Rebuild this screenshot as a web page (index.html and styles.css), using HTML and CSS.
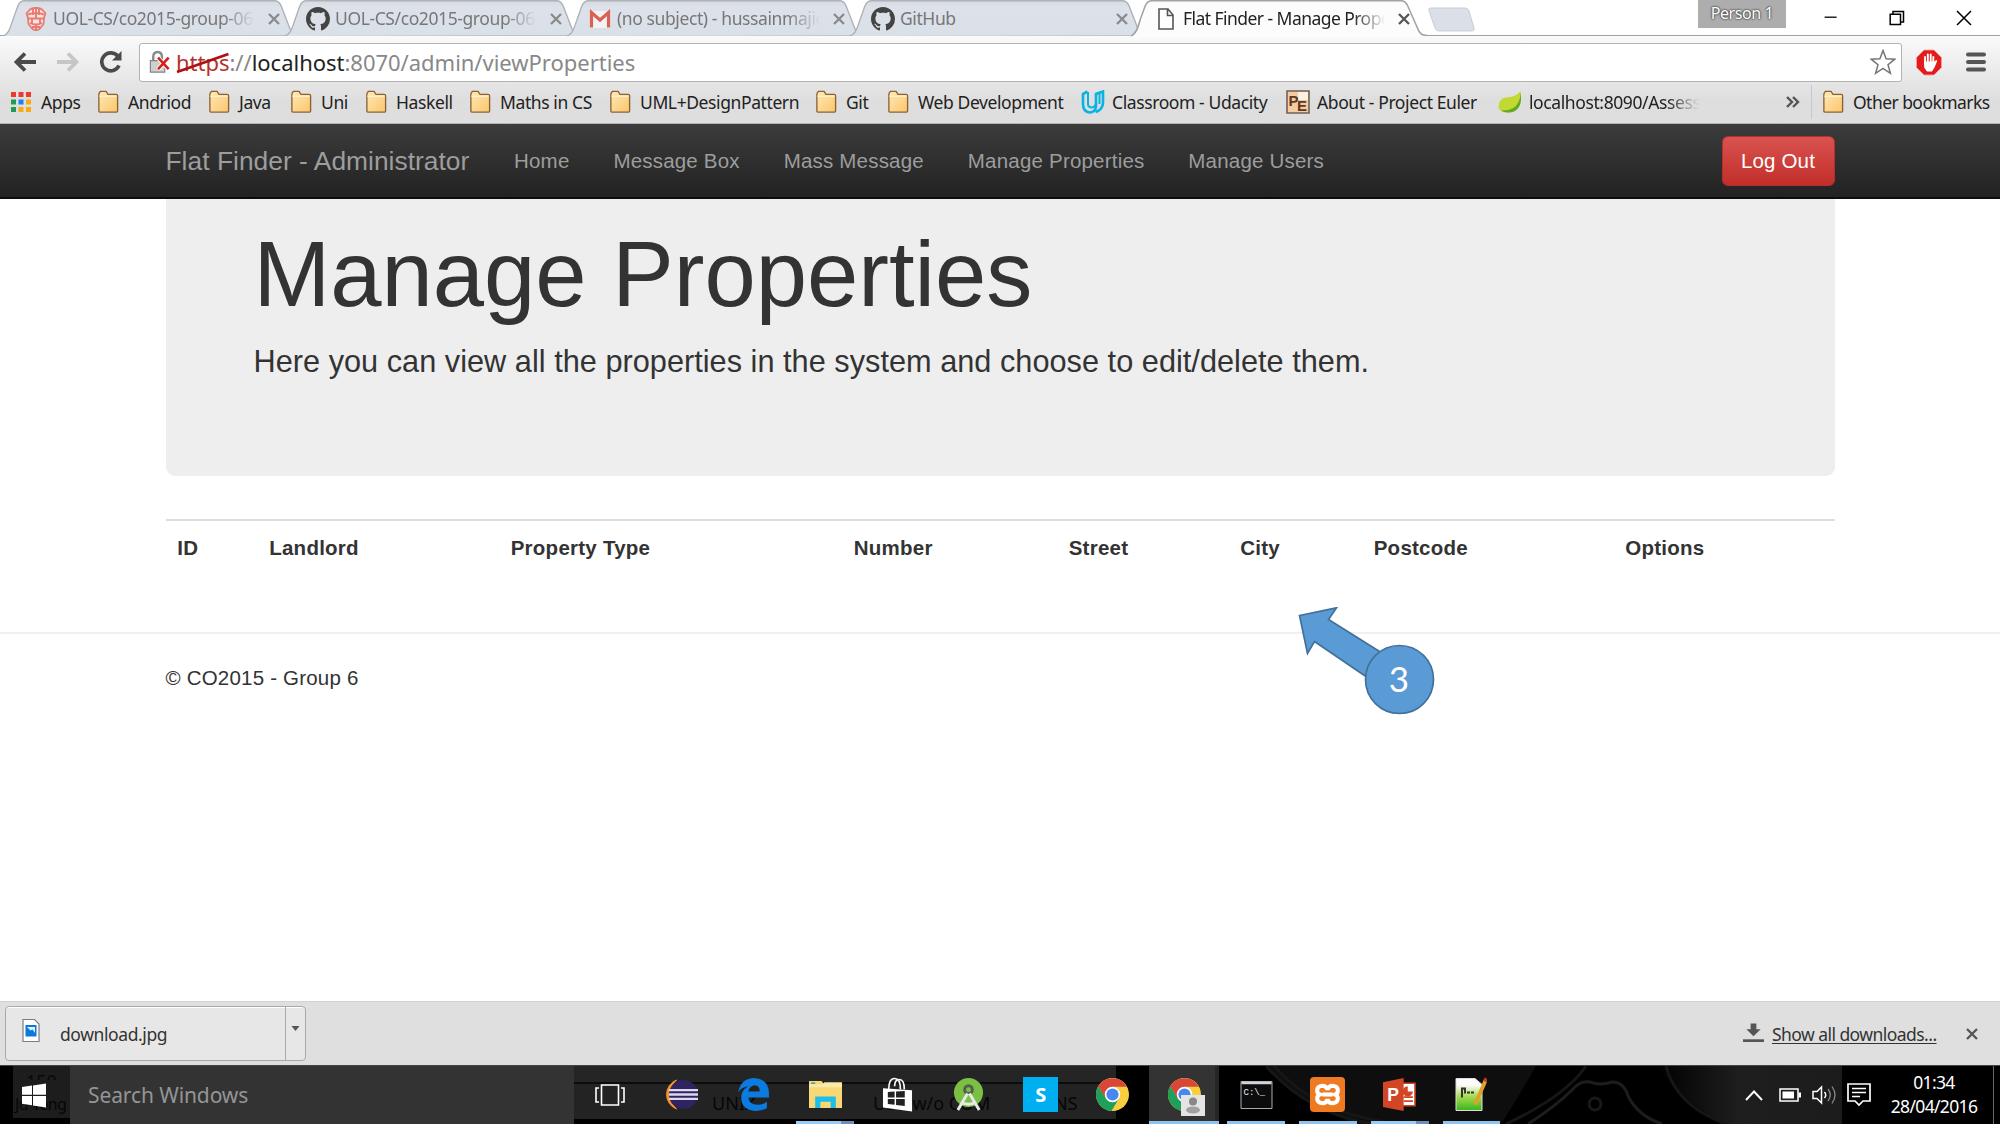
FILE: index.html
```html
<!DOCTYPE html>
<html lang="en">
<head>
<meta charset="utf-8">
<title>Flat Finder - Manage Properties</title>
<link rel="stylesheet" href="styles.css">
</head>
<body>
<svg width="0" height="0" class="defs" aria-hidden="true">
  <defs>
    <linearGradient id="fold" x1="0" y1="0" x2="1" y2="1"><stop offset="0" stop-color="#ffeab4"/><stop offset="1" stop-color="#fbc56c"/></linearGradient>
    <linearGradient id="npp" x1="0" y1="0" x2="0" y2="1"><stop offset="0.2" stop-color="#fdfdfd"/><stop offset="0.55" stop-color="#a9dc52"/><stop offset="1" stop-color="#38b41c"/></linearGradient>
    <linearGradient id="haze" x1="0" y1="0" x2="1" y2="0"><stop offset="0" stop-color="#000"/><stop offset=".45" stop-color="#1e1e1e"/><stop offset="1" stop-color="#1c1c1c"/></linearGradient>
    <symbol id="folder" viewBox="0 0 22 25"><path d="M1.5 22V4.500q0-1.500 1.500-3h6l2 3h8.500q1.500 0 1.500 1.500V22q0 1-1 1h-17.500q-1 0-1-1z" fill="url(#fold)" stroke="#8b6238" stroke-width="1.400"/><path d="M2 6.500h18" stroke="#fff3cf" stroke-width="1.300"/></symbol>
    <symbol id="x" viewBox="0 0 12 12"><path d="M1 1l10 10M11 1L1 11" stroke="currentColor" stroke-width="2.300" fill="none"/></symbol>
    <symbol id="octocat" viewBox="0 0 16 16"><path fill="#444" fill-rule="evenodd" d="M8 0C3.580 0 0 3.580 0 8c0 3.540 2.290 6.530 5.470 7.590.4.070.55-.17.55-.38 0-.19-.01-.82-.01-1.490-2.010.37-2.530-.49-2.690-.94-.09-.23-.48-.94-.82-1.130-.28-.15-.68-.52-.01-.53.63-.01 1.080.58 1.230.82.72 1.210 1.870.87 2.330.66.07-.52.28-.87.51-1.070-1.780-.2-3.640-.89-3.640-3.950 0-.87.31-1.590.82-2.150-.08-.2-.36-1.020.08-2.120 0 0 .67-.21 2.200.82.64-.18 1.320-.27 2-.27s1.360.09 2 .27c1.530-1.040 2.200-.82 2.200-.82.44 1.100.16 1.920.08 2.120.51.56.82 1.270.82 2.150 0 3.070-1.870 3.750-3.650 3.950.29.25.54.73.54 1.480 0 1.070-.01 1.930-.01 2.200 0 .21.15.46.55.38A8.010 8.010 0 0 0 16 8c0-4.420-3.580-8-8-8z"/></symbol>
    <symbol id="chrome" viewBox="0 0 32 32"><circle cx="16" cy="16" r="16" fill="#f9cf3e"/><path d="M2.100 8A16 16 0 0 1 29.900 8.500H16L9 20z" fill="#d9473b"/><path d="M2.100 8A16 16 0 0 0 15 32L22.500 19.500 9.500 20z" fill="#1fa05a"/><circle cx="16" cy="16" r="7.500" fill="#fff"/><circle cx="16" cy="16" r="5.900" fill="#4687f0"/></symbol>
    <linearGradient id="tabfill" x1="0" y1="0" x2="0" y2="1"><stop offset="0" stop-color="#d6dbe2"/><stop offset=".2" stop-color="#dde2ea"/><stop offset="1" stop-color="#dae0e8"/></linearGradient>
    <symbol id="tab" viewBox="0 0 300 36" preserveAspectRatio="none"><path d="M2 36C8 34 9 28 12 20L17 6Q19 .7 24 .7H276Q281 .7 283 6L292 29Q294 35 299 35.500" fill="url(#tabfill)" stroke="#aeb2b8" stroke-width="1.400"/></symbol>
  </defs>
</svg>

<header class="chrome">
  <div class="tabstrip">
    <div class="tab tab-1">
      <svg class="shape"><use href="#tab"/></svg>
      <svg class="fav" viewBox="0 0 24 24"><path d="M6 2.500Q12-1 18 2.500l3.500 4L20 11l-.5 6-4 5-3.500 1.500L8.500 22l-4-5L4 11 2.500 6.500z" fill="#fbe3e0" stroke="#e67b72" stroke-width="1.800"/><path d="M4 7.500q8-3 16 0M4.500 11.500h15M6 16q6 3 12 0M8 20h8M9 2v6M15 2v6M12 1v11M8 12v5M16 12v5M12 17v6" fill="none" stroke="#e67b72" stroke-width="1.900"/></svg>
      <span class="label fade">UOL-CS/co2015-group-06</span>
      <svg class="close"><use href="#x"/></svg>
    </div>
    <div class="tab tab-2">
      <svg class="shape"><use href="#tab"/></svg>
      <svg class="fav"><use href="#octocat"/></svg>
      <span class="label fade">UOL-CS/co2015-group-06</span>
      <svg class="close"><use href="#x"/></svg>
    </div>
    <div class="tab tab-3">
      <svg class="shape"><use href="#tab"/></svg>
      <svg class="fav" viewBox="0 0 24 24"><path d="M2 4h20v17H2z" fill="#f3f3f3"/><path d="M3.500 20.500V5.500L12 13l8.500-7.500v15" fill="none" stroke="#dc6155" stroke-width="3.200"/></svg>
      <span class="label fade">(no subject) - hussainmajid</span>
      <svg class="close"><use href="#x"/></svg>
    </div>
    <div class="tab tab-4">
      <svg class="shape"><use href="#tab"/></svg>
      <svg class="fav"><use href="#octocat"/></svg>
      <span class="label">GitHub</span>
      <svg class="close"><use href="#x"/></svg>
    </div>
    <div class="tab tab-5 active">
      <svg class="shape" viewBox="0 0 294 37" preserveAspectRatio="none"><path d="M0 36C5 34 7 28 9 20L14 6Q16 .7 21 .7H267Q272 .7 274 6L284 29Q286 35.500 293 35.500V37H0z" fill="#fcfcfc"/><path d="M0 36C5 34 7 28 9 20L14 6Q16 .7 21 .7H267Q272 .7 274 6L284 29Q286 35.500 293 35.500" fill="none" stroke="#a2a2a2" stroke-width="1.500"/></svg>
      <svg class="fav" viewBox="0 0 24 24"><path d="M5 2h9l5 6v14H5zM13.500 2v6.500H19" fill="#fff" stroke="#555" stroke-width="1.600"/></svg>
      <span class="label fade">Flat Finder - Manage Properties</span>
      <svg class="close"><use href="#x"/></svg>
    </div>
    <svg class="newtab" viewBox="0 0 48 25"><path d="M4 1h34q3 0 4 3l5 17q1 3-3 3H12q-3 0-4-3L2 4q-1-3 2-3z" fill="#dbe0e8" stroke="#c9cdd3"/></svg>
    <div class="window-controls">
      <span class="person">Person 1</span>
      <svg viewBox="0 0 16 20" class="wc wc-min"><path d="M0 9h15" stroke="#000" stroke-width="1.600"/></svg>
      <svg viewBox="0 0 16 16" class="wc wc-max"><path d="M4 4V1.500h10.500v10.500H12M1.200 4.200h10.300v10.300H1.200z" fill="none" stroke="#000" stroke-width="1.500"/></svg>
      <svg viewBox="0 0 16 16" class="wc wc-close"><path d="M1 1l14 14M15 1L1 15" stroke="#000" stroke-width="1.500"/></svg>
    </div>
  </div>

  <div class="toolbar">
    <svg class="nav-ico back" viewBox="0 0 24 22"><path d="M23 11H4M12 2.500L3.500 11l8.500 8.500" fill="none" stroke="#4a4a4a" stroke-width="3.800"/></svg>
    <svg class="nav-ico forward" viewBox="0 0 24 22"><path d="M1 11h19M12 2.500l8.500 8.500-8.500 8.500" fill="none" stroke="#c6c6c6" stroke-width="3.800"/></svg>
    <svg class="nav-ico reload" viewBox="0 0 24 24"><path d="M19 6.500A9 9 0 1 0 20 15.500" fill="none" stroke="#4a4a4a" stroke-width="3.600"/><path d="M22.500 1v9.500H13z" fill="#4a4a4a"/></svg>
    <div class="omnibox">
      <svg class="lock" viewBox="0 0 22 26"><path d="M4 11V7q0-5 4.500-5T13 7v4" fill="none" stroke="#8a8a8a" stroke-width="2.500"/><path d="M1 11h15v12H1z" fill="#cfcfcf" stroke="#848484" stroke-width="1.200"/><path d="M9 8l11 12M20 8L9 20" stroke="#fff" stroke-width="4.500"/><path d="M9 8l11 12M20 8L9 20" stroke="#d2201c" stroke-width="2.700"/></svg>
      <span class="url"><span class="scheme">https<svg class="strike" viewBox="0 0 54 22" preserveAspectRatio="none"><path d="M1 20L53 2" stroke="#b01010" stroke-width="2.800"/></svg></span>://<b>localhost</b>:8070/admin/viewProperties</span>
      <svg class="star" viewBox="0 0 26 26"><path d="M13 1.500l3.100 8.300 8.700.4-6.800 5.500 2.400 8.600-7.400-4.900-7.400 4.900L8 15.700 1.200 10.200l8.700-.4z" fill="#fff" stroke="#757575" stroke-width="1.500"/></svg>
    </div>
    <svg class="adblock" viewBox="0 0 26 26"><path d="M8 .5h10l7.500 7.500v10L18 25.500H8L.5 18V8z" fill="#e51c1c" stroke="#f5a3a0" stroke-width=".8"/><path d="M9 14V7.500M11.800 12V5M14.700 12V5M17.300 13V7.500" stroke="#fff" stroke-width="1.900" stroke-linecap="round"/><path d="M8 12h10.300l2-1.500q1.200.2.700 1.500l-2.500 6-2.500 4h-5L8.200 18z" fill="#fff"/></svg>
    <svg class="menu" viewBox="0 0 20 20"><path d="M2 2.500h16M2 10h16M2 17.500h16" stroke="#555" stroke-width="4" stroke-linecap="round"/></svg>
  </div>

  <div class="bookmarks">
    <span class="bm b1"><svg class="apps" viewBox="0 0 20 20"><path d="M0 0h5v5H0zM7.500 0h5v5h-5zM15 0h5v5h-5z" fill="#ee3a2e"/><path d="M0 7.500h5v5H0zM0 15h5v5H0z" fill="#1e9b54"/><path d="M7.500 7.500h5v5h-5z" fill="#1a82f0"/><path d="M15 7.500h5v5h-5zM7.500 15h5v5h-5zM15 15h5v5h-5z" fill="#f8ab13"/></svg><i>Apps</i></span>
    <span class="bm b2"><svg class="fo"><use href="#folder"/></svg><i>Andriod</i></span>
    <span class="bm b3"><svg class="fo"><use href="#folder"/></svg><i>Java</i></span>
    <span class="bm b4"><svg class="fo"><use href="#folder"/></svg><i>Uni</i></span>
    <span class="bm b5"><svg class="fo"><use href="#folder"/></svg><i>Haskell</i></span>
    <span class="bm b6"><svg class="fo"><use href="#folder"/></svg><i>Maths in CS</i></span>
    <span class="bm b7"><svg class="fo"><use href="#folder"/></svg><i>UML+DesignPattern</i></span>
    <span class="bm b8"><svg class="fo"><use href="#folder"/></svg><i>Git</i></span>
    <span class="bm b9"><svg class="fo"><use href="#folder"/></svg><i>Web Development</i></span>
    <span class="bm b10"><svg class="ic" viewBox="0 0 24 24"><path d="M6.500 1.500L2 4v10q0 8 7 8.500 6-.5 6-7V4l7-2.500v11q0 7-7.500 9.500" fill="none" stroke="#08b3e3" stroke-width="2.600"/><path d="M7 2v12q0 3 3 3.500 4 0 5-4M18.500 3v11" fill="none" stroke="#08b3e3" stroke-width="2"/></svg><i>Classroom - Udacity</i></span>
    <span class="bm b11"><svg class="ic" viewBox="0 0 24 24"><path d="M1 1h22v22H1z" fill="#f6cba2" stroke="#6d6258" stroke-width="1.600"/><path d="M12 2h10v8H12z" fill="#fff" opacity=".7"/><text x="2.500" y="15.500" class="pe">P</text><text x="11" y="21" class="pe">E</text></svg><i>About - Project Euler</i></span>
    <span class="bm b12"><svg class="ic" viewBox="0 0 24 24"><path d="M22.500 1q3 20-11 21.500Q3 23 .5 18 0 9 8 7.500 18 7 22.500 1z" fill="#c3d832"/><path d="M22.800 3q2 18-11.300 19.500Q6 23 3 20.500q13 1 17.500-8.500 2-4 2.300-9z" fill="#63a823"/></svg><i class="fade assess">localhost:8090/Assessment</i></span>
    <svg class="more" viewBox="0 0 14 12"><path d="M1 1l5 5-5 5M7 1l5 5-5 5" fill="none" stroke="#555" stroke-width="2.400"/></svg>
    <span class="bm b13"><svg class="fo"><use href="#folder"/></svg><i>Other bookmarks</i></span>
  </div>
</header>

<nav class="navbar">
  <a class="brand">Flat Finder - Administrator</a>
  <div class="links"><a>Home</a><a>Message Box</a><a>Mass Message</a><a>Manage Properties</a><a>Manage Users</a></div>
  <button class="logout">Log Out</button>
</nav>

<main class="page">
  <section class="jumbotron">
    <h1>Manage Properties</h1>
    <p>Here you can view all the properties in the system and choose to edit/delete them.</p>
  </section>
  <div class="table-head">
    <span>ID</span><span>Landlord</span><span>Property Type</span><span>Number</span><span>Street</span><span>City</span><span>Postcode</span><span>Options</span>
  </div>
  <footer class="footer">
    © CO2015 - Group 6
    <svg class="callout" viewBox="0 0 140 110"><path d="M2.500 8.500L39.500 .8 31.500 12.500 93 51 77 75 17.500 34.500 10.500 46.500z" fill="#5b9bd5" stroke="#41719c" stroke-width="1.700"/><circle cx="102.500" cy="72.500" r="34" fill="#5b9bd5" stroke="#41719c" stroke-width="1.700"/><text x="102" y="84.500" text-anchor="middle">3</text></svg>
  </footer>
</main>

<div class="downloads">
  <div class="download">
    <div class="file"><svg viewBox="0 0 18 24"><path d="M1 1h11.500L17 5.500V23H1z" fill="#fff" stroke="#7d7d7d" stroke-width="1.200"/><path d="M3.500 6.500h11v11.500h-11z" fill="#0b79dc"/><path d="M5 8.500h8v6l-2.500-3.500-2 1z" fill="#dff0ff"/></svg>download.jpg</div>
    <div class="drop"><svg viewBox="0 0 8 5"><path d="M0 0h8L4 5z" fill="#555"/></svg></div>
  </div>
  <svg class="dl-arrow" viewBox="0 0 22 20"><path d="M8 0h6v6h4.500L11 13.500 3.500 6H8z" fill="#555"/><path d="M0 18h22" stroke="#555" stroke-width="2.800"/></svg>
  <a class="show-all">Show all downloads...</a>
  <svg class="dl-close"><use href="#x"/></svg>
</div>

<div class="taskbar">
  <div class="start"><span class="ghost g1">150</span><span class="ghost g2">Ju Teng</span><svg viewBox="0 0 24 24"><path d="M0 3.500l10-1.400V11.300H0zM11 2l13-2v11.300H11zM0 12.400h10v9.300L0 20.300zM11 12.400h13V24l-13-2z" fill="#fff"/></svg></div>
  <div class="search">Search Windows</div>
  <div class="tasks">
    <div class="backdrop"><span class="ghost g3">UNIX</span><span class="ghost g4">USB w/o COM</span><span class="ghost g5">NS</span></div>
    <svg class="smoke" viewBox="0 0 576 58" preserveAspectRatio="none"><path d="M0 0h270Q250 35 235 58H90Q40 40 0 0z" fill="#0e0e0e"/><path d="M390 0h186v58H460Q420 40 390 0z" fill="url(#haze)"/><path d="M0 0Q45 50 110 58M8 0q40 46 112 56M240 58Q300 30 320 0M400 0q10 40 60 58" fill="none" stroke="#161616" stroke-width="3"/><path d="M262 58Q290 40 306 24q8-10 18-8 10 4 22 0 12 0 16 14 10 20 34 28" fill="none" stroke="#1d1d1d" stroke-width="3"/><circle cx="329" cy="38" r="6" fill="none" stroke="#181818" stroke-width="3"/></svg>
    <span class="slot"><svg viewBox="0 0 30 22" class="i-view"><path d="M6.500 1h17v20h-17zM4 4H1v14h3M26 4h3v14h-3" fill="none" stroke="#fff" stroke-width="1.600"/></svg></span>
    <span class="slot"><svg viewBox="0 0 34 32" class="i32"><path d="M12 1A16 16 0 0 0 12 31 20 20 0 0 1 12 1z" fill="#f79425" stroke="#f79425"/><circle cx="19" cy="16" r="15" fill="#2f2461"/><path d="M4 11.500h30M4 16h30M4 20.500h30" stroke="#ddd8ee" stroke-width="2.400"/></svg></span>
    <span class="slot"><svg viewBox="0 0 32 32" class="i32"><path d="M1 14Q4 0 17 0 31 1 31 15v4H11q1 7 9 7 5 0 9-3v6q-5 3-11 3Q4 31 4 19q0-7 7-11-7 1-10 6zM11 13h11q0-6-5-6-5 1-6 6z" fill="#0b7be0" fill-rule="evenodd"/></svg></span>
    <span class="slot open stack"><svg viewBox="0 0 32 28" class="i32"><path d="M0 1h12l2 2h18v24H0z" fill="#f8d775"/><path d="M0 4h13l2-2h17v5H0z" fill="#fbe9a8"/><path d="M6 27V16h20v11h-5v-6H11v6z" fill="#1fbdec"/><path d="M2 3h4" stroke="#19a6a0" stroke-width="1.300"/></svg></span>
    <span class="slot"><svg viewBox="0 0 32 36" class="i-store"><path d="M7 12Q7 1 13 1t6 11M13 9q0-7 5-7t5 10" fill="none" stroke="#fff" stroke-width="1.700"/><path d="M1 11l30 2v22L1 31z" fill="#fff"/><path d="M6 15l7-.5v6H6zM14.500 14.400l9-.6v6.700h-9zM6 22h7v6l-7-.8zM14.500 22h9v7.300l-9-1z" fill="#222"/></svg></span>
    <span class="slot"><svg viewBox="0 0 32 34" class="i32"><circle cx="16" cy="15" r="15" fill="#7cbf45"/><circle cx="16" cy="12" r="4" fill="none" stroke="#546149" stroke-width="3"/><path d="M15 16L5 33M17 16l10 17M8 25q8 4 16 0" fill="none" stroke="#e8e8e8" stroke-width="3"/></svg></span>
    <span class="slot"><span class="skype">S</span></span>
    <span class="slot"><svg class="i32"><use href="#chrome"/></svg></span>
    <span class="slot open current"><svg class="i32"><use href="#chrome"/></svg><svg class="badge" viewBox="0 0 24 21"><path d="M0 0h24v21H0z" fill="#e4e4e4"/><circle cx="12" cy="6.500" r="4" fill="#888"/><ellipse cx="12" cy="15" rx="7" ry="3.500" fill="#a1a1a1"/></svg></span>
    <span class="slot open"><svg viewBox="0 0 32 28" class="i-cmd"><path d="M.5.500h31v27H.5z" fill="#0c0c0c" stroke="#a8adb3"/><path d="M1 2h30" stroke="#cfd5dc" stroke-width="2.500"/><text x="3" y="14" class="cmd">C:\_</text></svg></span>
    <span class="slot open"><svg viewBox="0 0 34 34" class="i-xampp"><rect width="34" height="34" rx="4" fill="#f07a22"/><path d="M12 8.500q4 0 5 4 1-4 5-4 5 .5 5 4.500 0 3-2.500 4 2.500 1 2.500 4 0 4-5 4.500-4 0-5-4-1 4-5 4-5-.5-5-4.500 0-3 2.500-4Q7 16 7 13q0-4 5-4.500z" fill="none" stroke="#fff" stroke-width="4"/><path d="M12 17h10" stroke="#fff" stroke-width="4"/></svg></span>
    <span class="slot open stack"><svg viewBox="0 0 32 32" class="i32"><path d="M17 5h14v22H17z" fill="#fff" stroke="#d24625" stroke-width="1.500"/><path d="M20 18.500h9M20 22.500h9" stroke="#d24625" stroke-width="1.700"/><path d="M24 8v5h5a5 5 0 1 1-5-5z" fill="#d24625"/><path d="M0 4l20-4v32L0 28z" fill="#d24625"/><text x="4" y="22" class="pp">P</text></svg></span>
    <span class="slot open"><svg viewBox="0 0 32 34" class="i-npp"><path d="M1 1h19l7 6v26H1z" fill="url(#npp)" stroke="#ddd"/><path d="M7 20v-9h3v5M12 15h3M16 15h3" fill="none" stroke="#333" stroke-width="2"/><path d="M31 2L20 27" stroke="#e5a027" stroke-width="3.800"/><path d="M30 4l1.500-3" stroke="#c0392b" stroke-width="4"/></svg></span>
  </div>
  <div class="tray">
    <svg viewBox="0 0 18 11" class="t-up"><path d="M1 10l8-8.500L17 10" fill="none" stroke="#fff" stroke-width="1.900"/></svg>
    <svg viewBox="0 0 22 14" class="t-bat"><path d="M1 1h18v12H1z" fill="none" stroke="#fff" stroke-width="1.500"/><path d="M3.500 3.500H15v7H3.500zM19.500 4.500H22v5h-2.500z" fill="#fff"/></svg>
    <svg viewBox="0 0 25 20" class="t-vol"><path d="M1 6.500h4L9.500 2v16L5 13.500H1z" fill="none" stroke="#fff" stroke-width="1.500"/><path d="M12.500 7q2.500 3 0 6" fill="none" stroke="#fff" stroke-width="1.500"/><path d="M16 4q4.500 6 0 12M20 1.500q6 8.500 0 17" fill="none" stroke="#8a8a8a" stroke-width="1.300"/></svg>
    <svg viewBox="0 0 24 24" class="t-note"><path d="M1 1h22v17h-7l-4 4-4-4H1z" fill="none" stroke="#fff" stroke-width="1.700"/><path d="M5 5.500h14M5 9.500h14M5 13.500h8" stroke="#fff" stroke-width="1.500"/></svg>
    <div class="clock"><span>01:34</span><span>28/04/2016</span></div>
    <div class="peek"></div>
  </div>
</div>
</body>
</html>
```
FILE: styles.css
```css
* { box-sizing: border-box; }
body {
  margin: 0; width: 2000px; height: 1124px; overflow: hidden;
  display: flex; flex-direction: column; background: #fff;
  font-family: "Liberation Sans", Arial, sans-serif; font-size: 20.5px; color: #333;
}
svg { display: block; flex: none; }
.defs { position: absolute; }

/* browser chrome */
.chrome { height: 124px; flex: none; font-family: "Noto Sans", sans-serif; background: linear-gradient(#fff 35px, #fafafa 36px, #dedede 100px, #dedede); border-bottom: 1px solid #b5b5b5; }
.tabstrip { height: 36px; display: flex; border-bottom: 1.500px solid #a2a2a2; }
.tab { position: relative; height: 36px; display: flex; align-items: center; padding: 1px 18px 0 23px; font-size: 17.500px; color: #777; flex: none; }
.shape { position: absolute; left: 0; top: 0; width: 100%; height: 36px; }
.tab > :not(.shape) { position: relative; }
.tab-1 { width: 297px; margin-left: 1px; }
.tab-2 { width: 297px; margin-left: -15px; }
.tab-3 { width: 298px; margin-left: -15px; }
.tab-4 { width: 298px; margin-left: -15px; }
.tab-5 { width: 297px; margin-left: -15px; color: #222; z-index: 2; }
.tab .shape { position: absolute; }
.tab-5 .shape { height: 37px; }
.fav { width: 24px; height: 24px; margin-right: 5px; }
.label { flex: 1; white-space: nowrap; overflow: hidden; letter-spacing: -.4px; height: 26px; line-height: 25px; }
.tab-5 .label { letter-spacing: -.55px; }
.fade { -webkit-mask-image: linear-gradient(90deg, #000 calc(100% - 32px), transparent); mask-image: linear-gradient(90deg, #000 calc(100% - 32px), transparent); }
.close { width: 12px; height: 12px; margin-left: 13px; color: #8a8a8a; }
.active .close { color: #555; }
.newtab { width: 48px; height: 25px; margin: 7px 0 0 -1px; }
.window-controls { margin-left: auto; display: flex; }
.person { width: 88px; height: 28px; background: #adadad; color: #fff; text-shadow: 0 0 2px #333, 0 0 2px #333; font-size: 16px; line-height: 27px; text-align: center; letter-spacing: -.4px; }
.wc { width: 16px; height: 16px; margin-top: 10px; }
.wc-min { margin-left: 37px; }
.wc-max { margin-left: 50px; }
.wc-close { margin-left: 51px; margin-right: 28px; }

.toolbar { height: 46px; display: flex; align-items: center; padding: 6px 14px 0 13px; }
.nav-ico { width: 24px; height: 22px; }
.forward { margin-left: 19px; }
.reload { margin-left: 19px; height: 24px; }
.omnibox { width: 1763px; height: 39px; margin-left: 16px; background: #fff; border: 1.500px solid #b2b2b2; border-radius: 3px; display: flex; align-items: center; padding: 0 5px 0 9px; font-size: 22px; color: #888; }
.lock { width: 22px; height: 25px; }
.url { margin-left: 5px; flex: 1; white-space: nowrap; letter-spacing: -.02px; line-height: 30px; }
.url b { font-weight: 400; color: #222; }
.scheme { position: relative; color: #b5302a; }
.strike { position: absolute; left: 0; top: 5px; width: 100%; height: 22px; }
.star { width: 26px; height: 26px; }
.adblock { width: 26px; height: 27px; margin-left: 14px; }
.menu { width: 20px; height: 20px; margin-left: auto; }

.bookmarks { height: 40px; display: flex; align-items: center; padding-left: 11px; font-size: 17.500px; color: #222; }
.bm { display: flex; align-items: center; flex: none; white-space: nowrap; }
.bm i { font-style: normal; letter-spacing: -.4px; }
.apps { width: 20px; height: 20px; margin-right: 10px; }
.fo { width: 22px; height: 24px; margin-right: 9px; }
.ic { width: 24px; height: 24px; margin-right: 7px; }
.b1 { width: 86px; } .b2 { width: 111px; } .b3 { width: 82px; } .b4 { width: 75px; }
.b5 { width: 104px; } .b6 { width: 140px; } .b7 { width: 206px; } .b8 { width: 72px; }
.b9 { width: 194px; } .b10 { width: 205px; } .b11 { width: 212px; } .b12 { width: 288px; }
.pe { font: 700 15px "Liberation Sans", sans-serif; fill: #5d3a26; }
.assess { width: 170px; overflow: hidden; }
.more { width: 14px; height: 12px; }
.b13 { border-left: 1px solid #c3c8d2; height: 34px; padding-left: 10px; margin-left: 11px; }
.bm.b13 i { letter-spacing: -.55px; }

/* page */
.navbar { height: 75px; flex: none; display: flex; align-items: center; padding: 1px 165.500px 0; background: linear-gradient(#3c3c3c, #222); border-bottom: 2px solid #0c0c0c; color: #9d9d9d; }
.brand { font-size: 26.350px; width: 348.500px; letter-spacing: .03px; }
.links { display: flex; gap: 43.900px; font-size: 20.500px; letter-spacing: .2px; }
.logout { margin-left: auto; width: 113px; height: 50px; border: 1.500px solid #b92c28; border-radius: 6px; background: linear-gradient(#d9534f, #c12e2a); color: #fff; font: 20.500px "Liberation Sans", sans-serif; padding: 0; letter-spacing: .15px; }
.page { flex: 1; display: flex; flex-direction: column; }
.jumbotron { height: 277px; margin: 0 165.500px; background: #eee; border-radius: 0 0 9px 9px; padding: 25px 88px 0; }
.jumbotron h1 { margin: 0; font-size: 92.200px; font-weight: 500; line-height: 101px; white-space: nowrap; }
.jumbotron p { margin: 15px 0 0; font-size: 30.700px; line-height: 43px; white-space: nowrap; letter-spacing: .02px; }
.table-head { margin: 43px 165.500px 0; border-top: 2px solid #ddd; height: 113px; padding-top: 12px; display: grid; grid-template-columns: 92px 241.500px 343px 215px 171.500px 133.500px 251.500px 221px; font-weight: 700; line-height: 30px; letter-spacing: .25px; }
.table-head span { padding-left: 11.700px; }
.footer { border-top: 2px solid #f0f0f0; padding: 29px 165.500px 0; line-height: 30px; position: relative; letter-spacing: .2px; }
.callout { position: absolute; left: 1297px; top: -27px; width: 140px; height: 110px; font: 35px Lato, sans-serif; letter-spacing: 0; }
.callout text { fill: #fff; }

/* download shelf */
.downloads { height: 64px; flex: none; background: #dfdfdf; border-top: 1px solid #d2d2d2; display: flex; align-items: center; padding: 0 22px 0 5px; font-family: "Noto Sans", sans-serif; font-size: 17.500px; color: #333; }
.download { width: 301px; height: 55px; display: flex; background: #e7e7e7; border: 1.500px solid #a9a9a9; border-radius: 4px; box-shadow: inset 0 1px #fff; }
.file { flex: 1; display: flex; align-items: center; padding-top: 1px; letter-spacing: -.4px; }
.file svg { width: 18px; height: 25px; margin: -7px 20px 0 16px; }
.drop { width: 20px; border-left: 1.500px solid #aaa; padding: 19px 0 0 5px; }
.drop svg { width: 9px; height: 5px; }
.dl-arrow { width: 21px; height: 20px; margin-left: auto; margin-bottom: 1px; }
.show-all { margin-left: 8px; width: 166px; text-decoration: underline; white-space: nowrap; text-underline-offset: 2px; letter-spacing: -.55px; padding-top: 1px; }
.dl-close { width: 12px; height: 12px; margin-left: 28px; color: #555; }

/* taskbar */
.taskbar { height: 59px; flex: none; background: #000; display: flex; border-top: 1px solid #444; font-family: "Noto Sans", sans-serif; color: #fff; }
.start { width: 70px; position: relative; padding: 17px 0 0 22px; background: linear-gradient(90deg, #000 13px, #1d1d1d 13px); border-bottom: 6px solid #000; }
.start svg { width: 24px; height: 25px; position: relative; }
.ghost { position: absolute; color: #060606; white-space: nowrap; font-size: 18px; line-height: 20px; }
.g1 { left: 26px; top: 5px; height: 9px; overflow: hidden; color: #090909; }
.g2 { left: 15px; top: 28px; font-size: 16px; letter-spacing: -.5px; }
.search { width: 504px; background: #333; color: #959595; font-size: 21px; line-height: 59px; padding-left: 18px; letter-spacing: -.1px; }
.tasks { position: relative; width: 1100px; display: flex; }
.backdrop { position: absolute; left: 0; top: 0; width: 542px; height: 53px; background: linear-gradient(#252525 16px, #0c0c0c 16px, #0c0c0c 18px, #232323 18px); }
.g3 { left: 138px; top: 27px; } .g4 { left: 299px; top: 27px; } .g5 { left: 480px; top: 27px; }
.smoke { position: absolute; left: 692px; top: 0; width: 576px; height: 58px; }
.slot { position: relative; width: 71.800px; height: 58px; display: flex; align-items: center; justify-content: center; flex: none; padding-bottom: 1px; }
.open::after { content: ""; position: absolute; left: 7px; right: 7px; bottom: 0; height: 3px; background: #8fc3ee; }
.stack::after { background: linear-gradient(90deg, #9acbf3 78%, #6d8fb3 78%); }
.current::before { content: ""; position: absolute; left: 1px; right: 1px; top: 0; bottom: 0; background: #333; border-right: 4px solid #262626; }
.current::after { left: 1px; right: 1px; }
.slot svg { position: relative; }
.i32 { width: 33px; height: 33px; }
.i-view { width: 30px; height: 22px; }
.i-store { width: 31px; height: 36px; }
.i-cmd { width: 33px; height: 28px; }
.i-xampp { width: 35px; height: 35px; }
.i-npp { width: 32px; height: 35px; }
.cmd { font: 9px "Liberation Mono", monospace; fill: #eee; }
.pp { font: 700 17px "Liberation Sans", sans-serif; fill: #fff; }
.skype { width: 35px; height: 35px; background: #00aff0; color: #fff; font-weight: 700; font-size: 20px; line-height: 35px; text-align: center; }
.slot .badge { position: absolute; left: 33px; top: 29px; width: 24px; height: 21px; }
.tray { flex: 1; display: flex; align-items: center; z-index: 1; padding-left: 71px; }
.t-up { width: 18px; height: 11px; }
.t-bat { width: 22px; height: 14px; margin-left: 16px; }
.t-vol { width: 25px; height: 20px; margin-left: 11px; }
.t-note { width: 24px; height: 24px; margin-left: 10px; }
.clock { display: flex; flex-direction: column; align-items: center; width: 88px; margin: -3px 0 0 19px; font-size: 17.500px; line-height: 24px; letter-spacing: -.65px; white-space: nowrap; }
.peek { width: 1px; height: 58px; background: #666; margin: 0 6px 0 auto; }
```
